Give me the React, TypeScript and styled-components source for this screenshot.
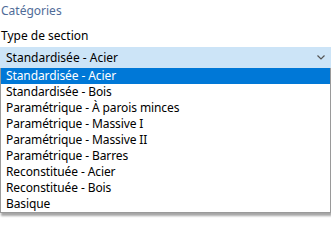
import React from "react";
import styled, { createGlobalStyle } from "styled-components";

const Global = createGlobalStyle`
  html, body { margin: 0; padding: 0; background: #ffffff; }
  body { font-family: "Noto Sans", "Open Sans", sans-serif; font-size: 12px; color: #000; }
`;

const Page = styled.div`
  width: 331px;
  height: 241px;
  display: flex;
  flex-direction: column;
  overflow: hidden;
`;

const SectionTitle = styled.div`
  color: #4f6c98;
  font-size: 12px;
  line-height: 16px;
  padding: 3px 0 0 1px;
  height: 21px;
  box-sizing: border-box;
`;

const FieldLabel = styled.div`
  font-size: 12px;
  line-height: 16px;
  padding: 7px 0 0 1px;
  height: 26px;
  box-sizing: border-box;
`;

const Combo = styled.div`
  display: flex;
  align-items: center;
  justify-content: space-between;
  height: 21px;
  background: #cce4f7;
  padding: 0 5px 0 6px;
  box-sizing: border-box;
  line-height: 16px;
`;

const Chevron = styled.svg`
  width: 8px;
  height: 5px;
  margin-right: 1px;
  margin-bottom: 1px;
`;

const List = styled.ul`
  list-style: none;
  margin: 0;
  padding: 0;
  width: 331px;
  box-sizing: border-box;
  border: 1px solid #9a9a9a;
  border-top: none;
  background: #fff;
  box-shadow: 1px 3px 2px rgba(0, 0, 0, 0.35);
`;

const Item = styled.li<{ $selected?: boolean }>`
  height: 16px;
  line-height: 16px;
  padding-left: 5px;
  letter-spacing: -0.1px;
  background: ${(p) => (p.$selected ? "#0078d7" : "transparent")};
  color: ${(p) => (p.$selected ? "#ffffff" : "#000000")};
  white-space: nowrap;
`;

const options = [
  "Standardisée - Acier",
  "Standardisée - Bois",
  "Paramétrique - À parois minces",
  "Paramétrique - Massive I",
  "Paramétrique - Massive II",
  "Paramétrique - Barres",
  "Reconstituée - Acier",
  "Reconstituée - Bois",
  "Basique",
];

export default function App() {
  return (
    <>
      <Global />
      <Page>
        <SectionTitle>Catégories</SectionTitle>
        <FieldLabel>Type de section</FieldLabel>
        <Combo>
          <span>Standardisée - Acier</span>
          <Chevron viewBox="0 0 8 5">
            <path d="M0.5 0.5 L4 4 L7.5 0.5" fill="none" stroke="#555" strokeWidth="1.2" />
          </Chevron>
        </Combo>
        <List>
          {options.map((o, i) => (
            <Item key={o} $selected={i === 0}>
              {o}
            </Item>
          ))}
        </List>
      </Page>
    </>
  );
}
